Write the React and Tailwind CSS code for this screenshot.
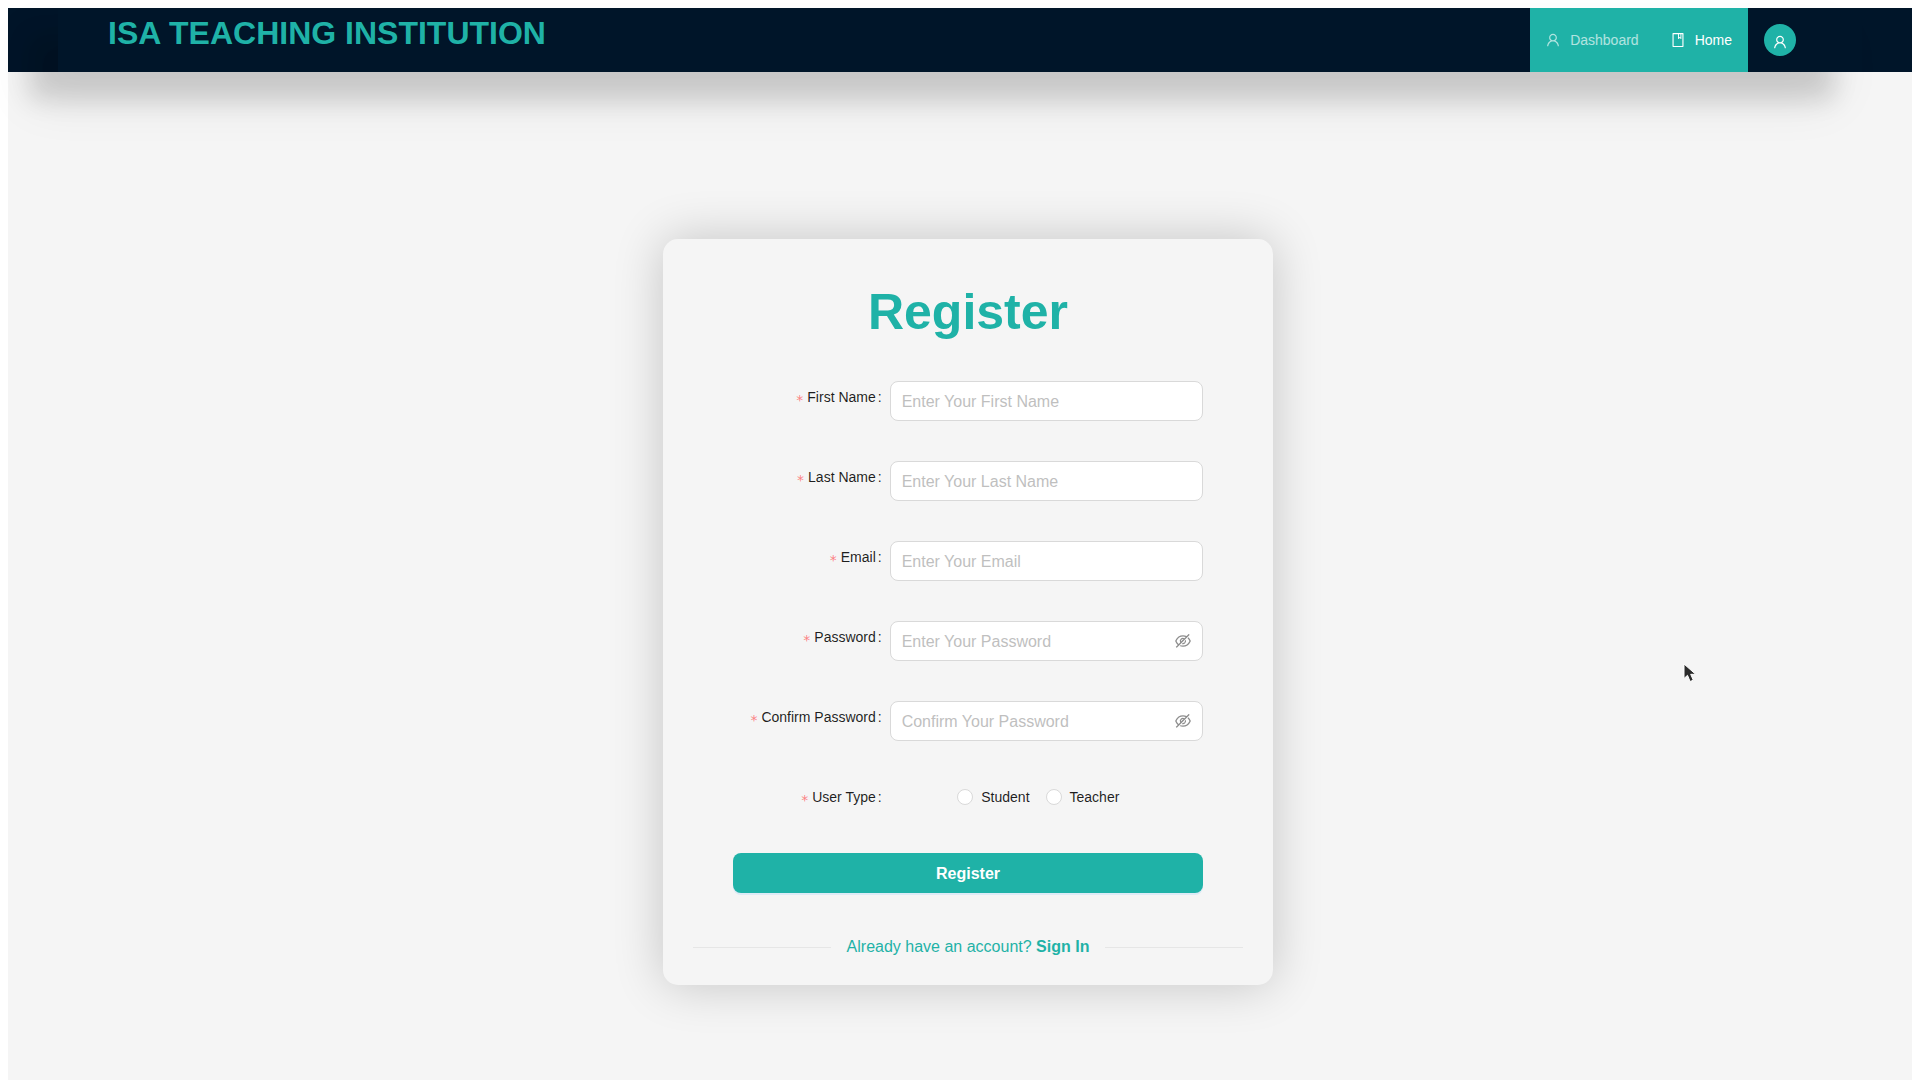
import { AiOutlineUser, AiOutlineBook, AiOutlineEyeInvisible } from "react-icons/ai";

const iconBox = "64 64 896 896";

const fields = [
  { id: "firstName", label: "First Name", placeholder: "Enter Your First Name", type: "text" },
  { id: "lastName", label: "Last Name", placeholder: "Enter Your Last Name", type: "text" },
  { id: "email", label: "Email", placeholder: "Enter Your Email", type: "email" },
  { id: "password", label: "Password", placeholder: "Enter Your Password", type: "password" },
  { id: "confirmPassword", label: "Confirm Password", placeholder: "Confirm Your Password", type: "password" },
];

function LabelText({ children }) {
  return (
    <>
      <span className="mr-1 pt-1.5 font-['DejaVu_Sans',sans-serif] leading-5 text-[#ff4d4f]/70" aria-hidden="true">*</span>
      {children}
      <span className="ml-0.5 mr-2">:</span>
    </>
  );
}

function Field({ id, label, placeholder, type }) {
  const secret = type === "password";
  return (
    <div className="grid grid-cols-3">
      <label htmlFor={id} className="flex h-8 items-center justify-end whitespace-nowrap">
        <LabelText>{label}</LabelText>
      </label>
      <div className="col-span-2 flex h-10 items-center rounded-lg border border-[#d9d9d9] bg-white px-[11px]">
        <input
          id={id}
          type={type}
          placeholder={placeholder}
          className="min-w-0 flex-1 bg-transparent pt-0.5 text-base outline-none placeholder:text-[#bfbfbf]"
        />
        {secret && (
          <button type="button" aria-label="Show password" className="text-black/45">
            <AiOutlineEyeInvisible viewBox={iconBox} className="size-4" />
          </button>
        )}
      </div>
    </div>
  );
}

function Choice({ value }) {
  return (
    <label className="flex items-center gap-2">
      <input
        type="radio"
        name="userType"
        value={value}
        className="size-4 appearance-none rounded-full border border-[#d9d9d9] bg-white checked:border-[5px] checked:border-[#1fb2a7]"
      />
      {value}
    </label>
  );
}

function Header() {
  return (
    <header className="bg-[#001529] px-[50px]">
      <div className="flex h-16 items-start justify-between pl-[50px] pr-[66px] shadow-[-28px_28px_24px_rgba(0,0,0,0.12),-28px_28px_50px_rgba(0,0,0,0.09)]">
        <h1 className="pt-[5px] text-[32px] font-bold leading-10 text-[#1fb2a7]">ISA TEACHING INSTITUTION</h1>
        <div className="flex h-16 items-center gap-4">
          <nav className="flex h-16 items-center bg-[#1fb2a7]">
            <a href="#dashboard" className="flex items-center gap-2.5 px-4 text-white/65">
              <AiOutlineUser viewBox={iconBox} className="size-3.5" />
              Dashboard
            </a>
            <a href="#home" className="flex items-center gap-2.5 px-4 text-white">
              <AiOutlineBook viewBox={iconBox} className="size-3.5" />
              Home
            </a>
          </nav>
          <button type="button" aria-label="Account" className="flex size-8 items-center justify-center rounded-full bg-[#1fb2a7] pt-1 text-white">
            <AiOutlineUser viewBox={iconBox} className="size-3.5" />
          </button>
        </div>
      </div>
    </header>
  );
}

export default function App() {
  return (
    <div className="min-h-screen bg-white px-2 pt-2 font-['Liberation_Sans',Arial,sans-serif] text-sm text-black/88">
      <div className="relative min-h-[calc(100vh-8px)] bg-[#f5f5f5]">
        <Header />
        <main className="flex justify-center pb-20 pl-4 pt-[167px]">
          <section className="w-[610px] rounded-[15px] bg-[#f5f5f5] px-[30px] pb-[26px] pt-[41px] shadow-[0_0_50px_rgba(0,0,0,0.2)]">
            <form className="px-10">
              <h2 className="text-center text-[50px] font-bold leading-[64px] text-[#1fb2a7]">Register</h2>
              <div className="mt-[37px] flex flex-col gap-10">
                {fields.map((f) => (
                  <Field key={f.id} {...f} />
                ))}
                <fieldset className="grid grid-cols-3">
                  <div className="flex h-8 items-center justify-end whitespace-nowrap">
                    <LabelText>User Type</LabelText>
                  </div>
                  <div className="col-span-2 flex h-8 items-center justify-center gap-4 pr-4">
                    <Choice value="Student" />
                    <Choice value="Teacher" />
                  </div>
                </fieldset>
                <button type="submit" className="h-10 rounded-lg bg-[#1fb2a7] pt-0.5 text-base font-bold text-white shadow-[0_2px_0_rgba(5,145,255,0.1)]">
                  Register
                </button>
              </div>
            </form>
            <div className="mt-[42px] flex items-center gap-4 text-base leading-6 text-[#1fb2a7]">
              <span className="h-px flex-1 bg-black/6" />
              <p>
                Already have an account? <a href="#signin" className="font-bold">Sign In</a>
              </p>
              <span className="h-px flex-1 bg-black/6" />
            </div>
          </section>
        </main>
        <svg className="absolute left-[1675px] top-[655px]" width="14" height="20" viewBox="0 0 14 20" aria-hidden="true">
          <path d="M1 1v14.500l3.500-3.200 2.600 6.200 3.200-1.300-2.600-5.900h5z" fill="#2b2b2b" stroke="#fff" strokeWidth="1" />
        </svg>
      </div>
    </div>
  );
}
